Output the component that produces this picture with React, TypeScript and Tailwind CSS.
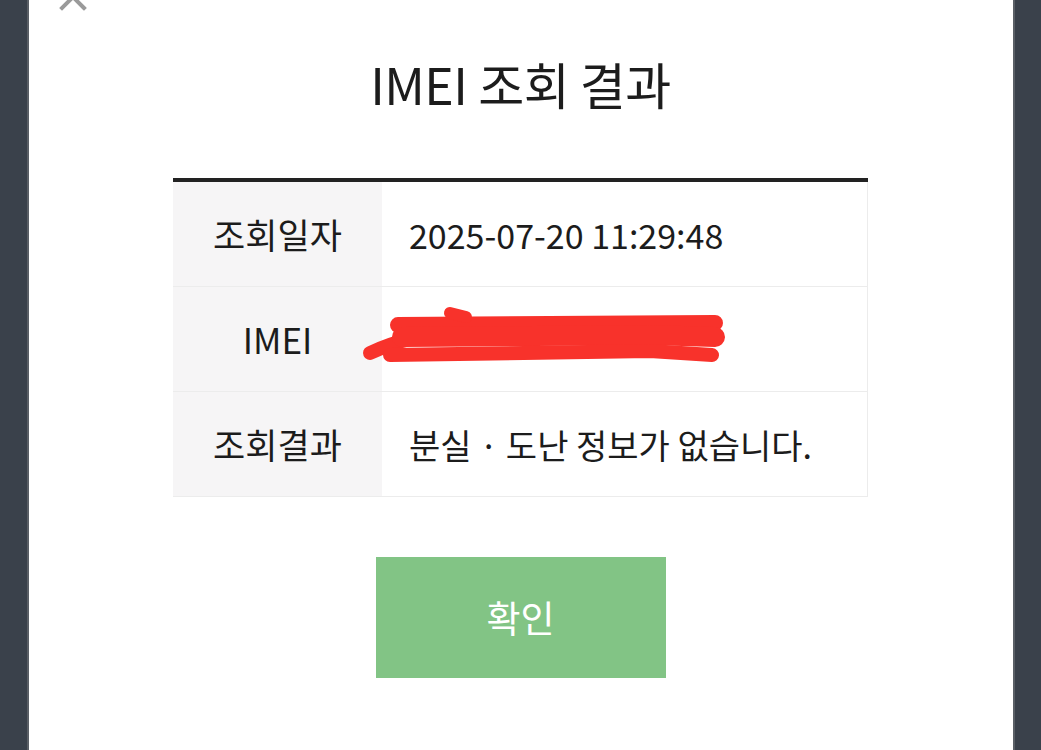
import React from 'react';

const rows = [
  { label: '조회일자', value: '2025-07-20 11:29:48' },
  { label: 'IMEI', value: '' },
  { label: '조회결과', value: '분실 · 도난 정보가 없습니다.' },
];

function Scribble() {
  return (
    <svg
      className="absolute left-[-32px] top-[16px] pointer-events-none"
      width="380"
      height="70"
      viewBox="0 0 380 70"
    >
      <g fill="none" stroke="#f8322b" strokeLinecap="round" strokeLinejoin="round">
        <path d="M20 50 C50 36 80 30 110 28" strokeWidth="14" />
        <path d="M48 22 L365 20" strokeWidth="16" />
        <path d="M52 34 L300 32 L365 34" strokeWidth="20" />
        <path d="M40 52 L300 48 L362 52" strokeWidth="14" />
        <path d="M100 10 L116 14" strokeWidth="12" />
      </g>
    </svg>
  );
}

export default function App() {
  return (
    <div
      className="w-[1041px] h-[750px] bg-[#3a414b] flex justify-center overflow-hidden"
      style={{ fontFamily: '"Noto Sans CJK KR", "Noto Sans", sans-serif' }}
    >
      <div className="relative w-[988px] h-full bg-white border-l-2 border-r-2 border-[#5a5f66] flex flex-col items-center">
        <svg className="absolute left-[29px] top-[-18px]" width="30" height="30" viewBox="0 0 30 30">
          <path d="M4 4 L26 26 M26 4 L4 26" stroke="#9a9a9a" strokeWidth="4" strokeLinecap="square" />
        </svg>

        <h1 className="mt-[48px] text-[50px] leading-[70px] text-[#1c1c1c] tracking-[-0.5px]">
          IMEI 조회 결과
        </h1>

        <div className="mt-[60px] w-[695px] border-t-4 border-[#222]">
          {rows.map((row, i) => (
            <div key={i} className="flex h-[105px] border-b border-[#ececec]">
              <div className="w-[209px] shrink-0 bg-[#f6f5f6] flex items-center justify-center text-[35px] text-[#1c1c1c]">
                {row.label}
              </div>
              <div className="relative flex-1 border-r border-[#ececec] flex items-center pl-[27px] text-[34px] text-[#1c1c1c]">
                {row.value}
                {row.label === 'IMEI' && <Scribble />}
              </div>
            </div>
          ))}
        </div>

        <button className="mt-[60px] w-[290px] h-[121px] bg-[#82c485] text-white text-[37px]">
          확인
        </button>
      </div>
    </div>
  );
}
